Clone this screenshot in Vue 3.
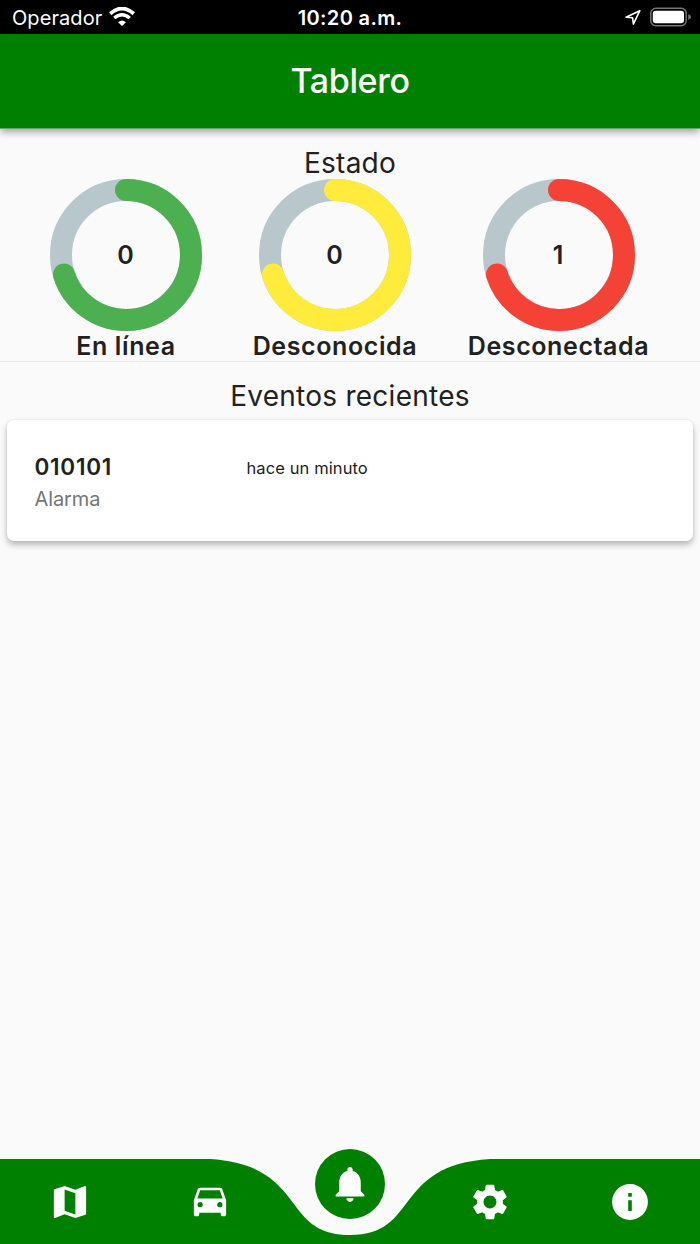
<script setup>
const radius = 65
const circumference = 2 * Math.PI * radius
const gauges = [
  { key: 'online', label: 'En línea', value: 0, progress: 0.7 },
  { key: 'unknown', label: 'Desconocida', value: 0, progress: 0.7 },
  { key: 'offline', label: 'Desconectada', value: 1, progress: 0.7 },
]
const events = [{ device: '010101', type: 'Alarma', time: 'hace un minuto' }]
const icons = {
  map: 'M20.5 3l-.16.03L15 5.1 9 3 3.36 4.9c-.21.07-.36.25-.36.48V20.5c0 .28.22.5.5.5l.16-.03L9 18.9l6 2.1 5.64-1.9c.21-.07.36-.25.36-.48V3.5c0-.28-.22-.5-.5-.5zM15 19l-6-2.11V5l6 2.11V19z',
  car: 'M18.92 5.01C18.72 4.42 18.16 4 17.5 4h-11c-.66 0-1.21.42-1.42 1.01L3 11v8c0 .55.45 1 1 1h1c.55 0 1-.45 1-1v-1h12v1c0 .55.45 1 1 1h1c.55 0 1-.45 1-1v-8l-2.08-5.99zM6.5 15c-.83 0-1.5-.67-1.5-1.5S5.67 12 6.5 12s1.5.67 1.5 1.5S7.33 15 6.5 15zm11 0c-.83 0-1.5-.67-1.5-1.5s.67-1.5 1.5-1.5 1.5.67 1.5 1.5-.67 1.5-1.5 1.5zM5 10l1.5-4.5h11L19 10H5z',
  bell: 'M12 22c1.1 0 2-.9 2-2h-4c0 1.1.89 2 2 2zm6-6v-5c0-3.07-1.64-5.64-4.5-6.32V4c0-.83-.67-1.5-1.5-1.5s-1.5.67-1.5 1.5v.68C7.63 5.36 6 7.92 6 11v5l-2 2v1h16v-1l-2-2z',
  gear: 'M19.14 12.94c.04-.3.06-.61.06-.94 0-.32-.02-.64-.07-.94l2.03-1.58c.18-.14.23-.41.12-.61l-1.92-3.32c-.12-.22-.37-.29-.59-.22l-2.39.96c-.5-.38-1.03-.7-1.62-.94l-.36-2.54c-.04-.24-.24-.41-.48-.41h-3.84c-.24 0-.43.17-.47.41l-.36 2.54c-.59.24-1.13.57-1.62.94l-2.39-.96c-.22-.08-.47 0-.59.22L2.74 8.87c-.12.21-.08.47.12.61l2.03 1.58c-.05.3-.09.63-.09.94s.02.64.07.94l-2.03 1.58c-.18.14-.23.41-.12.61l1.92 3.32c.12.22.37.29.59.22l2.39-.96c.5.38 1.03.7 1.62.94l.36 2.54c.05.24.24.41.48.41h3.84c.24 0 .44-.17.47-.41l.36-2.54c.59-.24 1.13-.56 1.62-.94l2.39.96c.22.08.47 0 .59-.22l1.92-3.32c.12-.22.07-.47-.12-.61l-2.01-1.58zM12 15.6c-1.98 0-3.6-1.62-3.6-3.6s1.62-3.6 3.6-3.6 3.6 1.62 3.6 3.6-1.62 3.6-3.6 3.6z',
  info: 'M12 2C6.48 2 2 6.48 2 12s4.48 10 10 10 10-4.48 10-10S17.52 2 12 2zm1 15h-2v-6h2v6zm0-8h-2V7h2v2z',
}
const navItems = ['map', 'car', 'bell', 'gear', 'info']
</script>

<template>
  <div class="screen">
    <div class="status">
      <div class="carrier">
        <span class="carrier-name">Operador</span>
        <svg class="wifi" width="26" height="20" viewBox="0 0 26 20">
          <path d="M1.2 6.7Q13 -3.7 24.8 6.7" fill="none" stroke="#fff" stroke-width="3.8" />
          <path d="M5.3 11Q13 4.4 20.7 11" fill="none" stroke="#fff" stroke-width="3.4" />
          <path d="M13 19L9.1 15.2Q13 11.7 16.9 15.2Z" fill="#fff" />
        </svg>
      </div>
      <div class="clock">10:20 a.m.</div>
      <div class="indicators">
        <svg width="17" height="17" viewBox="0 0 17 17">
          <path d="M1 8.2L14.8 1.7L8.4 15.1L7.6 8.8Z" fill="none" stroke="#fff" stroke-width="1.6" stroke-linejoin="round" />
        </svg>
        <svg width="42" height="20" viewBox="0 0 42 20">
          <rect x="0.8" y="1.2" width="35.4" height="17.6" rx="5" fill="none" stroke="#777" stroke-width="1.4" />
          <rect x="2.8" y="3.7" width="31.2" height="12.6" rx="3" fill="#fff" />
          <path d="M38.3 6.9Q41 8.4 41 10Q41 11.6 38.3 13.1Z" fill="#777" />
        </svg>
      </div>
    </div>
    <header class="appbar"><h1>Tablero</h1></header>

    <section class="state">
      <h2>Estado</h2>
      <div class="gauges">
        <div v-for="g in gauges" :key="g.key" class="gauge" :class="g.key">
          <svg class="ring" width="152" height="152" viewBox="0 0 152 152">
            <circle class="track" cx="76" cy="76" :r="radius" />
            <circle
              class="arc" cx="76" cy="76" :r="radius" transform="rotate(-90 76 76)"
              :stroke-dasharray="`${circumference * g.progress} ${circumference}`"
            />
          </svg>
          <span class="value">{{ g.value }}</span>
          <span class="label">{{ g.label }}</span>
        </div>
      </div>
    </section>

    <section class="events">
      <h2>Eventos recientes</h2>
      <article v-for="e in events" :key="e.device" class="card">
        <div class="event-main">
          <div class="device">{{ e.device }}</div>
          <div class="type">{{ e.type }}</div>
        </div>
        <div class="time">{{ e.time }}</div>
      </article>
    </section>

    <nav class="nav">
      <svg class="nav-shape" width="700" height="85" viewBox="0 0 700 85">
        <path d="M0 0H210C308 6.3 280 76 350 76C420 76 392 6.3 490 0H700V85H0Z" fill="#008000" />
      </svg>
      <div v-for="item in navItems" :key="item" class="nav-item" :class="{ active: item === 'bell' }">
        <span class="nav-button">
          <svg width="44" height="44" viewBox="-0.28 -0.28 24.56 24.56"><path :d="icons[item]" fill="#fff" /></svg>
        </span>
      </div>
    </nav>
  </div>
</template>

<style>
body { background: #fafafa; }
</style>

<style scoped>
.screen {
  width: 700px;
  height: 1244px;
  display: flex;
  flex-direction: column;
  background: #fafafa;
  color: #212121;
  font-family: Inter, "Liberation Sans", sans-serif;
  overflow: hidden;
  white-space: nowrap;
}
.status {
  height: 34px;
  flex: none;
  display: grid;
  grid-template-columns: 1fr auto 1fr;
  align-items: center;
  background: #000;
  color: #fff;
  font-size: 20px;
  line-height: 32px;
}
.carrier { display: flex; align-items: center; gap: 7px; padding-left: 12px; }
.carrier-name { letter-spacing: 0.08px; padding-top: 2px; }
.wifi { display: block; margin-bottom: 1px; }
.clock { font-weight: 600; letter-spacing: 0.35px; padding-top: 2px; }
.indicators { display: flex; align-items: center; justify-content: flex-end; gap: 8px; padding-right: 8px; }
.appbar {
  height: 94px;
  flex: none;
  display: flex;
  align-items: center;
  justify-content: center;
  background: #008000;
  color: #fff;
  box-shadow: 0 1px 0 #6ba56b, 0 4px 7px -1px rgba(0, 0, 0, 0.3), 0 6px 8px rgba(0, 0, 0, 0.1);
}
h1 { margin: 0; font-size: 34px; font-weight: 500; line-height: 40px; letter-spacing: -0.35px; }
h2 { margin: 0; font-size: 28px; font-weight: 400; line-height: 32px; letter-spacing: 0.25px; text-align: center; }
.state { height: 234px; flex: none; padding-top: 19px; box-sizing: border-box; border-bottom: 1px solid #e8e8e8; }
.gauges { display: flex; gap: 51.5px; padding-left: 50px; }
.gauge { width: 152px; flex: none; display: grid; grid-template-rows: 152px 30px; justify-items: center; align-items: center; }
.gauge.unknown { width: 163px; }
.gauge.offline { width: 181px; }
.ring, .value { grid-area: 1 / 1; }
.track, .arc { fill: none; stroke-width: 22; }
.track { stroke: #b8c7cc; }
.arc { stroke-linecap: round; }
.online .arc { stroke: #4caf50; }
.unknown .arc { stroke: #ffeb3b; }
.offline .arc { stroke: #f44336; }
.value { font-size: 25px; font-weight: 600; line-height: 30px; margin-right: 1px; }
.label { font-size: 25px; font-weight: 600; line-height: 30px; letter-spacing: 0.6px; margin: 0 -4px; }
.events { padding: 18px 7px 0; }
.card {
  height: 121px;
  margin-top: 8px;
  padding: 31px 28px 0 27.5px;
  box-sizing: border-box;
  display: grid;
  grid-template-columns: 212px 1fr;
  background: #fff;
  border-radius: 7px;
  box-shadow: 0 4px 6px rgba(0, 0, 0, 0.26), 0 0 3px rgba(0, 0, 0, 0.08);
}
.device { font-size: 22.5px; font-weight: 600; line-height: 31px; letter-spacing: 0.75px; }
.type { font-size: 20px; line-height: 35px; color: #757575; letter-spacing: -0.1px; }
.time { font-size: 16.5px; line-height: 34px; letter-spacing: 0.1px; }
.nav {
  position: relative;
  height: 85px;
  flex: none;
  box-sizing: border-box;
  padding-top: 1px;
  margin-top: auto;
  display: grid;
  grid-template-columns: repeat(5, 1fr);
}
.nav-shape { position: absolute; left: 0; top: 0; }
.nav-item { position: relative; display: flex; align-items: center; justify-content: center; }
.nav-button { display: flex; align-items: center; justify-content: center; width: 70px; height: 70px; border-radius: 50%; }
.active .nav-button { position: relative; top: -18px; background: #008000; }
</style>
